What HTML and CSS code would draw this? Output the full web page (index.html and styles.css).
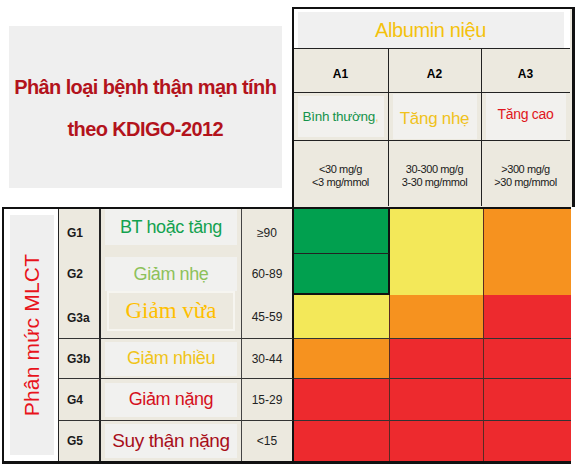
FILE: index.html
```html
<!DOCTYPE html>
<html lang="vi">
<head>
	<meta charset="utf-8">
	<title>Phân loại bệnh thận mạn tính theo KDIGO-2012</title>
<link rel="stylesheet" href="styles.css">
</head>
<body>

<div class="top">
	<div class="titleArea">
		<div class="titleBox">
			<p>Phân loại bệnh thận mạn tính</p>
			<p>theo KDIGO-2012</p>
		</div>
	</div>
	<div class="head">
		<div class="albumin"><span>Albumin niệu</span></div>
		<div class="hcell code">A1</div>
		<div class="hcell code">A2</div>
		<div class="hcell code last">A3</div>
		<div class="hcell word"><span class="pill green">Bình thường<em>,</em></span></div>
		<div class="hcell word"><span class="pill yellow big">Tăng nhẹ</span></div>
		<div class="hcell word last"><span class="pill red up">Tăng cao</span></div>
		<div class="hcell unit">&lt;30 mg/g<br>&lt;3 mg/mmol</div>
		<div class="hcell unit">30-300 mg/g<br>3-30 mg/mmol</div>
		<div class="hcell unit last">&gt;300 mg/g<br>&gt;30 mg/mmol</div>
	</div>
</div>

<div class="table">
	<div class="side"><div class="sideBox"><span>Phân mức MLCT</span></div></div>

	<!-- G column -->
	<div class="g r1">G1</div>
	<div class="g r2">G2</div>
	<div class="g r3 low">G3a</div>
	<div class="g r4 line">G3b</div>
	<div class="g r5 line">G4</div>
	<div class="g r6 line">G5</div>

	<!-- text column -->
	<div class="t r1"><span class="lbl c-g1">BT hoặc tăng</span></div>
	<div class="t r2"><span class="lbl c-g2">Giảm nhẹ</span></div>
	<div class="t r3"><span class="framed">Giảm vừa</span></div>
	<div class="t r4 line"><span class="lbl c-g3b">Giảm nhiều</span></div>
	<div class="t r5 line"><span class="lbl c-g4">Giảm nặng</span></div>
	<div class="t r6 line"><span class="lbl c-g5">Suy thận nặng</span></div>

	<!-- eGFR column -->
	<div class="n r1">&ge;90</div>
	<div class="n r2">60-89</div>
	<div class="n r3">45-59</div>
	<div class="n r4 line">30-44</div>
	<div class="n r5 line">15-29</div>
	<div class="n r6 line">&lt;15</div>

	<!-- A1 -->
	<div class="c a1 r1 green-bg box">&nbsp;</div>
	<div class="c a1 r2 green-bg box mid">&nbsp;</div>
	<div class="c a1 r3 yellow-bg">&nbsp;</div>
	<div class="c a1 r4 orange-bg line">&nbsp;</div>
	<div class="c a1 r5 red-bg line">&nbsp;</div>
	<div class="c a1 r6 red-bg line">&nbsp;</div>

	<!-- A2 -->
	<div class="c a2 r12 yellow-bg">&nbsp;</div>
	<div class="c a2 r3 orange-bg">&nbsp;</div>
	<div class="c a2 r4 red-bg line">&nbsp;</div>
	<div class="c a2 r5 red-bg line">&nbsp;</div>
	<div class="c a2 r6 red-bg line">&nbsp;</div>

	<!-- A3 -->
	<div class="c a3 r12 orange-bg">&nbsp;</div>
	<div class="c a3 r3 red-bg">&nbsp;</div>
	<div class="c a3 r4 red-bg line">&nbsp;</div>
	<div class="c a3 r5 red-bg line">&nbsp;</div>
	<div class="c a3 r6 red-bg line">&nbsp;</div>
</div>

</body>
</html>
```

FILE: styles.css
```css
	body {
		margin: 0;
		background-color: #FFFFFF;
		font-family: "Liberation Sans", Arial, sans-serif;
		width: 575px;
		height: 470px;
		overflow: hidden;
	}
	p {
		margin: 0;
	}

	/* top part: title + albumin header */
	.top {
		display: flex;
		height: 207px;
	}
	.titleArea {
		width: 292px;
		padding: 26px 10px 0 9px;
		box-sizing: border-box;
	}
	.titleBox {
		height: 162px;
		background-color: #EFEFEF;
		display: flex;
		flex-direction: column;
		justify-content: center;
		align-items: center;
		gap: 19px;
		color: #B3131C;
		font-weight: bold;
		font-size: 20px;
		letter-spacing: -0.6px;
		padding-top: 3px;
		box-sizing: border-box;
	}
	.head {
		margin-top: 7px;
		width: 279px;
		border: 2px solid #111;
		border-right-width: 3px;
		border-bottom: none;
		background-color: #ECE9DF;
		display: grid;
		grid-template-columns: 95px 93px 88px;
		grid-template-rows: 39px 44px 48px 66px;
	}
	.albumin {
		grid-column: 1 / 4;
		background-color: #FFFFFF;
		padding: 3px 6px 0 4px;
	}
	.albumin span {
		display: flex;
		justify-content: center;
		align-items: center;
		height: 36px;
		background-color: #F0F0F0;
		color: #F4C20D;
		font-size: 20px;
		letter-spacing: -0.4px;
	}
	.hcell {
		border-top: 1px solid #222;
		border-right: 1px solid #222;
		display: flex;
		justify-content: center;
		align-items: center;
		text-align: center;
	}
	.hcell.last {
		border-right: none;
	}
	.code {
		font-weight: bold;
		font-size: 12px;
		padding-top: 6px;
	}
	.word {
		padding: 3px 4px;
	}
	.pill {
		background-color: #F2F1EE;
		width: 100%;
		height: 100%;
		display: flex;
		justify-content: center;
		align-items: center;
		font-size: 14px;
		letter-spacing: -0.3px;
	}
	.pill em {
		font-style: normal;
		color: #E9D27A;
	}
	.pill.green {
		color: #14934A;
		font-size: 13.5px;
	}
	.pill.yellow {
		color: #F0C21C;
	}
	.pill.big {
		font-size: 17px;
		padding-top: 4px;
	}
	.pill.red {
		color: #E01520;
	}
	.pill.up {
		padding-bottom: 6px;
	}
	.unit {
		font-size: 11px;
		line-height: 13px;
		color: #1A1A1A;
		letter-spacing: -0.4px;
		padding-top: 4px;
	}

	/* bottom table */
	.table {
		margin-left: 2px;
		width: 569px;
		height: 257px;
		box-sizing: border-box;
		border: 2px solid #111;
		border-bottom-width: 3px;
		border-right-width: 3px;
		background-color: #ECE9DF;
		display: grid;
		grid-template-columns: 55px 42px 141px 52px 96px 94px 87px;
		grid-template-rows: 44px 42px 43px 40px 42px 41px;
	}
	.side {
		grid-column: 1;
		grid-row: 1 / 7;
		background-color: #FFFFFF;
		border-right: 1px solid #222;
		padding: 6px 4px 6px 6px;
	}
	.sideBox {
		height: 100%;
		background-color: #EFEFEF;
		display: flex;
		justify-content: center;
		align-items: center;
	}
	.sideBox span {
		display: block;
		transform: rotate(-90deg);
		white-space: nowrap;
		color: #E8131B;
		font-size: 21px;
		letter-spacing: 0.2px;
	}
	.r1 { grid-row: 1; }
	.r2 { grid-row: 2; }
	.r3 { grid-row: 3; }
	.r4 { grid-row: 4; }
	.r5 { grid-row: 5; }
	.r6 { grid-row: 6; }
	.r12 { grid-row: 1 / 3; }
	.line {
		border-top: 1px solid #333;
	}

	.g {
		grid-column: 2;
		border-right: 2px solid #222;
		display: flex;
		align-items: center;
		padding-left: 8px;
		font-weight: bold;
		font-size: 12px;
		color: #1A1A1A;
	}
	.g.r1 {
		padding-top: 4px;
	}
	.g.low {
		padding-top: 3px;
	}
	.t {
		grid-column: 3;
		border-right: 1px solid #444;
		padding: 0 4px 0 4px;
		display: flex;
		justify-content: center;
		align-items: center;
	}
	.lbl {
		background-color: #F1F1EF;
		width: 100%;
		height: 34px;
		display: flex;
		justify-content: center;
		align-items: center;
		font-size: 18px;
		letter-spacing: -0.4px;
	}
	.r1 .lbl {
		align-self: flex-start;
		height: 36px;
	}
	.c-g1 { color: #13A24F; }
	.c-g2 { color: #8DC15A; }
	.c-g3b { color: #F0C419; }
	.c-g4 { color: #D5101C; }
	.c-g5 { color: #A80E1A; font-size: 19px; }
	.framed {
		width: 100%;
		height: 40px;
		margin-top: -12px;
		margin-left: 2px;
		margin-right: 2px;
		border: 2px solid #F6F5F0;
		box-sizing: border-box;
		display: flex;
		justify-content: center;
		align-items: center;
		font-family: "Liberation Serif", "Times New Roman", serif;
		font-size: 23px;
		color: #FFBF00;
	}
	.n {
		grid-column: 4;
		border-right: 2px solid #111;
		display: flex;
		justify-content: center;
		align-items: center;
		font-size: 12px;
		color: #222;
	}
	.n.r1 {
		padding-top: 3px;
	}

	.c {
		border-right: 1px solid #5A2A22;
	}
	.a1 { grid-column: 5; }
	.a2 { grid-column: 6; }
	.a3 { grid-column: 7; border-right: none; }
	.green-bg { background-color: #01A04F; }
	.yellow-bg { background-color: #F3E859; }
	.orange-bg { background-color: #F6921F; }
	.red-bg { background-color: #ED2A2E; }
	.box {
		border-right: 2px solid #111;
	}
	.box.mid {
		border-top: 1px solid #222;
		border-bottom: 2px solid #111;
	}
```
